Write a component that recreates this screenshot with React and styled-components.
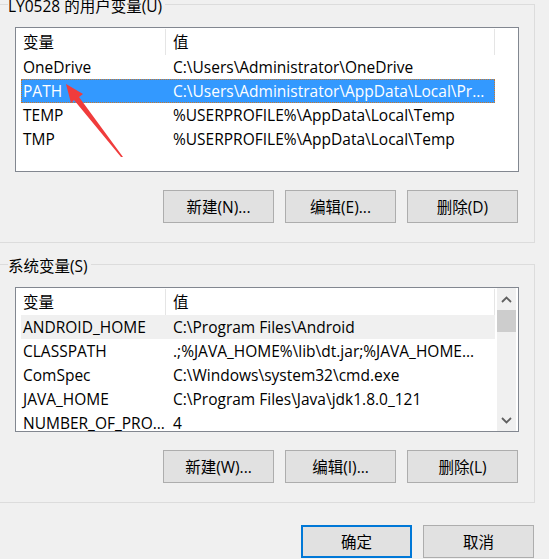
import React from "react";
import styled, { createGlobalStyle } from "styled-components";

const Global = createGlobalStyle`
  html, body { margin: 0; padding: 0; background: #f0f0f0; overflow: hidden; }
  body { font-family: "Open Sans", "Noto Sans CJK SC", sans-serif; font-size: 15.5px; color: #000; }
`;

const Page = styled.div`
  position: relative;
  width: 549px;
  height: 559px;
  overflow: hidden;
  padding-top: 4px;
  box-sizing: border-box;
`;

const Group = styled.div`
  position: relative;
  width: 535px;
  box-sizing: border-box;
  border: 1px solid #dcdcdc;
  border-left: none;
  margin-top: ${(p) => p.$mt || 0}px;
  padding: 22px 16px 19px 15px;
`;

const Legend = styled.div`
  position: absolute;
  top: -9px;
  left: 8px;
  line-height: 20px;
  padding-right: 3px;
  background: #f0f0f0;
  white-space: nowrap;
`;

const ListBox = styled.div`
  position: relative;
  width: 504px;
  height: 145px;
  box-sizing: border-box;
  border: 1px solid #828790;
  background: #fff;
  display: flex;
  overflow: hidden;
`;

const ListMain = styled.div`
  flex: 1;
  display: flex;
  flex-direction: column;
  min-width: 0;
`;

const Header = styled.div`
  display: flex;
  height: 27px;
  flex-shrink: 0;
`;

const HeadCell = styled.div`
  width: ${(p) => p.$w}px;
  box-sizing: border-box;
  padding-left: 7px;
  line-height: 27px;
  border-right: 1px solid #e5e5e5;
  margin: 1px 0 0;
  height: 26px;
`;

const Row = styled.div`
  display: flex;
  height: 24px;
  width: 474px;
  margin-left: 5px;
  flex-shrink: 0;
  box-sizing: border-box;
  line-height: 24px;
  background: ${(p) => (p.$sel ? "#3399ff" : p.$soft ? "#f0f0f0" : "transparent")};
  color: ${(p) => (p.$sel ? "#fff" : "#000")};
  outline: ${(p) => (p.$sel ? "1px dotted #c9782a" : "none")};
  outline-offset: -1px;
`;

const Cell = styled.div`
  width: ${(p) => p.$w}px;
  box-sizing: border-box;
  padding-left: ${(p) => p.$pl}px;
  white-space: nowrap;
  overflow: hidden;
`;

const ScrollBar = styled.div`
  width: 19px;
  margin-right: 2px;
  background: #f0f0f0;
  display: flex;
  flex-direction: column;
  align-items: center;
`;

const ScrollBtn = styled.div`
  height: 22px;
  width: 19px;
  display: flex;
  align-items: center;
  justify-content: center;
`;

const Thumb = styled.div`
  width: 19px;
  height: 22px;
  background: #cdcdcd;
`;

const Track = styled.div`
  flex: 1;
`;

const ButtonRow = styled.div`
  display: flex;
  justify-content: flex-end;
  gap: 11px;
  margin-top: 18px;
  padding-right: ${(p) => p.$pr || 0}px;
`;

const Button = styled.div`
  width: 111px;
  height: 33px;
  box-sizing: border-box;
  border: ${(p) => (p.$primary ? "2px solid #0078d7" : "1px solid #adadad")};
  background: #e1e1e1;
  display: flex;
  align-items: center;
  justify-content: center;
  white-space: nowrap;
`;

const Footer = styled.div`
  display: flex;
  justify-content: flex-end;
  gap: 11px;
  margin-top: 22px;
  padding-right: 15px;
`;

const ArrowSvg = styled.svg`
  position: absolute;
  left: 0;
  top: 0;
  pointer-events: none;
`;

const Chevron = ({ up }) => (
  <svg width="11" height="7" viewBox="0 0 11 7">
    <path
      d={up ? "M1 6 L5.5 1.5 L10 6" : "M1 1 L5.5 5.5 L10 1"}
      fill="none"
      stroke="#606060"
      strokeWidth="1.8"
    />
  </svg>
);

const userVars = [
  ["OneDrive", "C:\\Users\\Administrator\\OneDrive"],
  ["PATH", "C:\\Users\\Administrator\\AppData\\Local\\Pr..."],
  ["TEMP", "%USERPROFILE%\\AppData\\Local\\Temp"],
  ["TMP", "%USERPROFILE%\\AppData\\Local\\Temp"],
];

const sysVars = [
  ["ANDROID_HOME", "C:\\Program Files\\Android"],
  ["CLASSPATH", ".;%JAVA_HOME%\\lib\\dt.jar;%JAVA_HOME..."],
  ["ComSpec", "C:\\Windows\\system32\\cmd.exe"],
  ["JAVA_HOME", "C:\\Program Files\\Java\\jdk1.8.0_121"],
  ["NUMBER_OF_PRO...", "4"],
];

const VarList = ({ rows, selIndex, softIndex, scroll }) => (
  <ListBox>
    <ListMain>
      <Header>
        <HeadCell $w={150}>变量</HeadCell>
        <HeadCell $w={329}>值</HeadCell>
      </Header>
      {rows.map(([k, v], i) => (
        <Row key={k} $sel={i === selIndex} $soft={i === softIndex}>
          <Cell $w={145} $pl={2}>{k}</Cell>
          <Cell $w={329} $pl={7}>{v}</Cell>
        </Row>
      ))}
    </ListMain>
    {scroll && (
      <ScrollBar>
        <ScrollBtn><Chevron up /></ScrollBtn>
        <Thumb />
        <Track />
        <ScrollBtn><Chevron /></ScrollBtn>
      </ScrollBar>
    )}
  </ListBox>
);

export default function App() {
  return (
    <>
      <Global />
      <Page>
        <Group>
          <Legend>LY0528 的用户变量(U)</Legend>
          <VarList rows={userVars} selIndex={1} />
          <ButtonRow>
            <Button>新建(N)...</Button>
            <Button>编辑(E)...</Button>
            <Button>删除(D)</Button>
          </ButtonRow>
        </Group>
        <Group $mt={21}>
          <Legend>系统变量(S)</Legend>
          <VarList rows={sysVars} softIndex={0} scroll />
          <ButtonRow>
            <Button>新建(W)...</Button>
            <Button>编辑(I)...</Button>
            <Button>删除(L)</Button>
          </ButtonRow>
        </Group>
        <Footer>
          <Button $primary>确定</Button>
          <Button>取消</Button>
        </Footer>
        <ArrowSvg width="549" height="559" viewBox="0 0 549 559">
          <polygon
            points="66,84 83,94 79,97 123,157 121,157 74,100 71,103"
            fill="#f03c3c"
          />
        </ArrowSvg>
      </Page>
    </>
  );
}
